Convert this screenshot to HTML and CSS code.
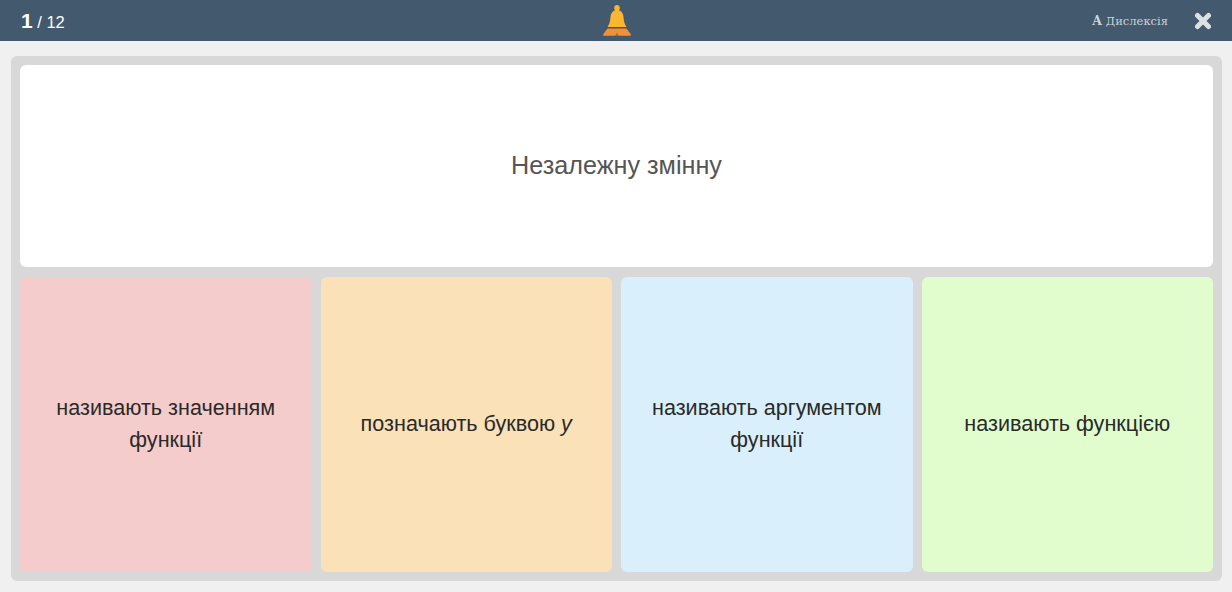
FILE: index.html
```html
<!DOCTYPE html>
<html lang="uk">
<head>
    <meta charset="UTF-8">
    <meta name="viewport" content="width=device-width, initial-scale=1.0">
    <title>Картки</title>
    <link rel="stylesheet" href="styles.css">
</head>
<body>
    <div class="topbar">
        <div class="counter"><b>1</b> / 12</div>
        <svg class="bell" viewBox="0 0 28 28" width="28" height="31" preserveAspectRatio="none">
            <path fill="#fbb62f" d="M14 0c1.600 0 2.800 1.200 2.800 2.700 0 .8-.3 1.500-.8 2 2.700.8 4.300 3.200 4.500 6 .2 3 .7 6.100 2.500 8.300.4.500.4 1-.1 1H5.100c-.5 0-.5-.5-.1-1 1.800-2.200 2.300-5.300 2.500-8.300.2-2.800 1.800-5.200 4.500-6-.5-.5-.8-1.200-.8-2C11.200 1.200 12.400 0 14 0z"/>
            <path fill="#5e4c2a" d="M4 20h20v1.300H4z"/>
            <path fill="#f0913a" d="M4.500 21.300H14c0 1.500 0 3 0 4.200l-1 1.500c-.4.500-1 .8-1.600.8H1.200c-.9 0-1.300-.9-.8-1.500z"/>
            <path fill="#f0913a" d="M23.500 21.300H14c0 1.500 0 3 0 4.200l1 1.500c.4.500 1 .8 1.600.8h10.200c.9 0 1.300-.9.8-1.500z"/>
            <path fill="#b9853a" d="M13.600 25h.8v3h-.8z"/>
        </svg>
        <div class="tools">
            <span class="dyslexia"><b>А</b> Дислексія</span>
            <svg class="close" viewBox="0 0 18 18" width="18" height="18">
                <path fill="none" stroke="#dce1e4" stroke-width="5" stroke-linecap="round" d="M3.500 3.500l11 11M14.500 3.500l-11 11"/>
            </svg>
        </div>
    </div>

    <div class="board">
        <div class="question">Незалежну змінну</div>
        <div class="answers">
            <div class="answer red">називають значенням функції</div>
            <div class="answer orange"><span>позначають буквою <i>y</i></span></div>
            <div class="answer blue">називають аргументом функції</div>
            <div class="answer green">називають функцією</div>
        </div>
    </div>
</body>
</html>
```

FILE: styles.css
```css
html, body {
    height: 100%;
}

body {
    margin: 0;
    display: flex;
    flex-direction: column;
    background: #f0f0f0;
    font-family: "Liberation Sans", Arial, sans-serif;
    overflow: hidden;
}

.topbar {
    height: 41px;
    flex: none;
    display: flex;
    align-items: center;
    justify-content: space-between;
    padding: 0 20px 0 21px;
    background: #42596e;
    color: #fff;
    position: relative;
}

.counter {
    font-size: 16.5px;
}

.counter b {
    font-size: 21px;
}

.bell {
    position: absolute;
    left: 603px;
    top: 5px;
}

.tools {
    display: flex;
    align-items: center;
    gap: 26px;
}

.dyslexia {
    font-family: "DejaVu Serif", serif;
    font-size: 11.5px;
    color: #ccd3d8;
}

.dyslexia b {
    font-size: 12.5px;
}

.board {
    flex: 1;
    margin: 15px 10px 11px 11px;
    padding: 9px;
    display: flex;
    flex-direction: column;
    gap: 10px;
    background: #d8d8d8;
    border-radius: 6px;
}

.question {
    height: 202px;
    flex: none;
    display: flex;
    align-items: center;
    justify-content: center;
    padding-bottom: 2px;
    box-sizing: border-box;
    background: #fff;
    border-radius: 6px;
    color: #555;
    font-size: 25.2px;
}

.answers {
    flex: 1;
    display: grid;
    grid-template-columns: repeat(4, 1fr);
    gap: 9px;
}

.answer {
    display: flex;
    align-items: center;
    justify-content: center;
    padding: 0 30px 1px;
    border-radius: 6px;
    color: #2a2a2a;
    font-size: 21.6px;
    line-height: 32px;
    text-align: center;
}

.red {
    background: #f5cccc;
}

.orange {
    background: #fae1b7;
}

.blue {
    background: #d9f0fc;
}

.green {
    background: #e1fdcd;
}
```
